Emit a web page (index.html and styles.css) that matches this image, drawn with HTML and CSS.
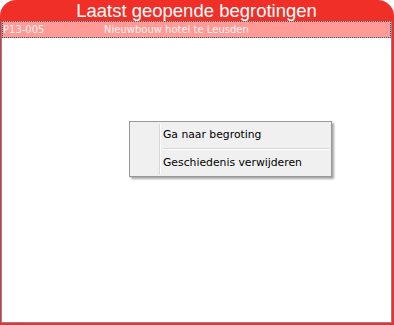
FILE: index.html
```html
<!DOCTYPE html>
<html lang="en">
<head>
  <meta charset="UTF-8" />
  <title>Laatst geopende begrotingen</title>
  <link rel="stylesheet" href="styles.css">
</head>
<body>
  <div class="window">
    <div class="header">Laatst geopende begrotingen</div>
    <div class="panel">
      <div class="row selected">
        <span class="code">P13-005</span>
        <span class="name">Nieuwbouw hotel te Leusden</span>
      </div>

      <div class="menu">
        <div class="menu-item">Ga naar begroting</div>
        <div class="menu-sep"></div>
        <div class="menu-item">Geschiedenis verwijderen</div>
      </div>
    </div>
  </div>
</body>
</html>
```

FILE: styles.css
```css
html, body {
  margin: 0;
  padding: 0;
  background: #ffffff;
}

body {
  font-family: 'DejaVu Sans', 'Liberation Sans', sans-serif;
  width: 394px;
  height: 325px;
  overflow: hidden;
}

.window {
  box-sizing: border-box;
  width: 394px;
  height: 325px;
  background: #f03028;
  border-radius: 16px 16px 0 0;
  padding: 0 2px 2px 1px;
  display: flex;
  flex-direction: column;
}

.header {
  height: 21px;
  line-height: 21px;
  text-align: center;
  color: #ffffff;
  font-family: 'Liberation Sans', sans-serif;
  font-size: 18.5px;
  flex-shrink: 0;
}

.panel {
  position: relative;
  flex: 1;
  background: #ffffff;
  border: 1px solid #7f8a9a;
  border-top: none;
}

.row {
  box-sizing: border-box;
  height: 17px;
  display: flex;
  align-items: center;
  font-size: 10px;
  color: #fff4f4;
  padding-left: 0;
}

.row.selected {
  background: #ff9a96;
  border: 1px dotted #2e5a66;
}

.row .code {
  width: 101px;
}

.menu {
  position: absolute;
  left: 127px;
  top: 100px;
  width: 203px;
  box-sizing: border-box;
  background: #f0f0f0;
  border: 1px solid #979797;
  box-shadow: 2px 2px 2px rgba(0,0,0,0.35);
  padding: 2px;
  background-image: linear-gradient(to right, transparent 27px, #d7d7d7 27px, #d7d7d7 28px, #ffffff 28px, #ffffff 29px, transparent 29px);
  background-repeat: no-repeat;
  background-size: 100% calc(100% - 4px);
  background-position: 2px 2px;
}

.menu-item {
  height: 22px;
  line-height: 22px;
  padding-left: 31px;
  font-family: 'DejaVu Sans', sans-serif;
  font-size: 10.8px;
  color: #000000;
}

.menu-sep {
  height: 1px;
  margin: 2px 0 2px 31px;
  background: #d7d7d7;
  border-bottom: 1px solid #ffffff;
}
```
